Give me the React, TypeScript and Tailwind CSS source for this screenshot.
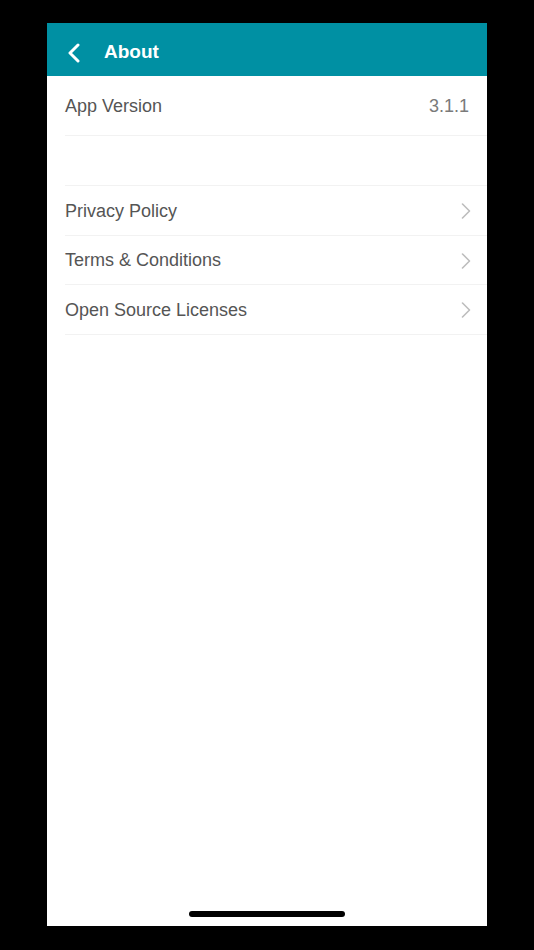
const links = ["Privacy Policy", "Terms & Conditions", "Open Source Licenses"];

function Chevron() {
  return (
    <svg width="10" height="16" viewBox="0 0 10 16">
      <path d="M1.5 1 L8.5 8 L1.5 15" fill="none" stroke="#bdbdbd" strokeWidth="1.6" strokeLinecap="round" strokeLinejoin="round" />
    </svg>
  );
}

export default function App() {
  return (
    <div className="flex h-[950px] w-full justify-center bg-black pt-[23px] font-['Liberation_Sans',Arial,sans-serif]">
      <div className="relative flex h-[903px] w-[440px] flex-col bg-white">
        {/* header */}
        <div className="flex h-[53px] items-center bg-[#0090a3] px-[20px] pt-[6px]">
          <svg width="14" height="20" viewBox="0 0 14 20">
            <path d="M11 2 L3 10 L11 18" fill="none" stroke="white" strokeWidth="3" strokeLinecap="round" strokeLinejoin="round" />
          </svg>
          <span className="ml-[23px] text-[19px] font-bold text-white">About</span>
        </div>

        <div className="ml-[18px] flex flex-col">
          <div className="flex h-[60px] items-center justify-between border-b border-[#f2f2f2] pt-[2px] pr-[18px]">
            <span className="text-[18px] text-[#555555]">App Version</span>
            <span className="text-[18px] text-[#7a7a7a]">3.1.1</span>
          </div>
          <div className="h-[50px] border-b border-[#f2f2f2]" />
          {links.map((l) => (
            <div key={l} className="flex h-[49.5px] items-center justify-between border-b border-[#f2f2f2] pt-[2px] pr-[16px]">
              <span className="text-[18px] text-[#555555]">{l}</span>
              <Chevron />
            </div>
          ))}
        </div>

        {/* home indicator */}
        <div className="absolute bottom-[9px] left-[142px] h-[6px] w-[156px] rounded-full bg-black" />
      </div>
    </div>
  );
}
